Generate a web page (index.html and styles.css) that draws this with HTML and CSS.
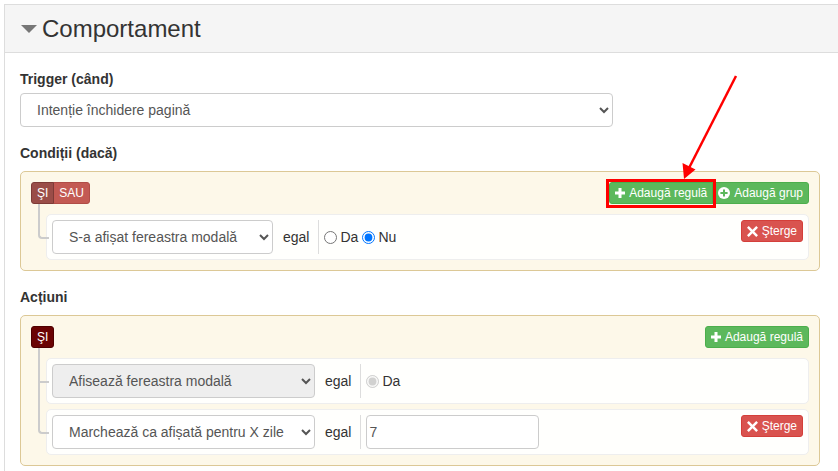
FILE: index.html
```html
<!DOCTYPE html>
<html lang="ro">
<head>
<meta charset="utf-8">
<title>Comportament</title>
<link rel="stylesheet" href="styles.css">
</head>
<body>
<div class="panel">
  <div class="panel-heading"><span class="caret"></span><span class="panel-title">Comportament</span></div>
  <div class="panel-body">
    <div class="form-group">
      <label class="lbl">Trigger (când)</label>
      <select class="form-control trigger-select"><option>Intenție închidere pagină</option></select>
    </div>

    <div class="form-group">
      <label class="lbl">Condiții (dacă)</label>
      <div class="qb-group">
        <div class="qb-header">
          <div class="btn-group">
            <span class="btn btn-xs btn-si">ŞI</span><span class="btn btn-xs btn-sau">SAU</span>
          </div>
          <div class="btn-group">
            <span class="btn btn-xs btn-success"><svg class="ico" width="10" height="10" viewBox="0 0 10 10"><path d="M3.5 0h3v3.5H10v3H6.5V10h-3V6.5H0v-3h3.5z" fill="#fff"/></svg>Adaugă regulă</span><span class="btn btn-xs btn-success"><svg class="ico" width="12" height="12" viewBox="0 0 12 12"><circle cx="6" cy="6" r="6" fill="#fff"/><path d="M5 2.4h2V5h2.6v2H7v2.6H5V7H2.4V5H5z" fill="#5cb85c"/></svg>Adaugă grup</span>
          </div>
        </div>
        <ul class="rules">
          <li class="rule">
            <select class="form-control sel-cond"><option>S-a afișat fereastra modală</option></select>
            <span class="op">egal</span>
            <span class="val">
              <label class="radio"><input type="radio" name="r1">Da</label>
              <label class="radio"><input type="radio" name="r1" checked>Nu</label>
            </span>
            <span class="btn btn-xs btn-danger del"><svg class="ico" width="11" height="11" viewBox="0 0 10 10"><path d="M1.6 0L5 3.4 8.4 0 10 1.6 6.6 5 10 8.4 8.4 10 5 6.6 1.6 10 0 8.4 3.4 5 0 1.6z" fill="#fff"/></svg>Şterge</span>
          </li>
        </ul>
      </div>
    </div>

    <div class="form-group">
      <label class="lbl">Acțiuni</label>
      <div class="qb-group">
        <div class="qb-header">
          <div class="btn-group">
            <span class="btn btn-xs btn-si-dark">ŞI</span>
          </div>
          <div class="btn-group">
            <span class="btn btn-xs btn-success"><svg class="ico" width="10" height="10" viewBox="0 0 10 10"><path d="M3.5 0h3v3.5H10v3H6.5V10h-3V6.5H0v-3h3.5z" fill="#fff"/></svg>Adaugă regulă</span>
          </div>
        </div>
        <ul class="rules">
          <li class="rule">
            <select class="form-control sel-act" disabled><option>Afisează fereastra modală</option></select>
            <span class="op">egal</span>
            <span class="val">
              <label class="radio"><input type="radio" name="r2" checked disabled>Da</label>
            </span>
          </li>
          <li class="rule">
            <select class="form-control sel-act"><option>Marchează ca afișată pentru X zile</option></select>
            <span class="op">egal</span>
            <span class="val">
              <input type="text" class="num-input" value="7">
            </span>
            <span class="btn btn-xs btn-danger del"><svg class="ico" width="11" height="11" viewBox="0 0 10 10"><path d="M1.6 0L5 3.4 8.4 0 10 1.6 6.6 5 10 8.4 8.4 10 5 6.6 1.6 10 0 8.4 3.4 5 0 1.6z" fill="#fff"/></svg>Şterge</span>
          </li>
        </ul>
      </div>
    </div>
  </div>
</div>

<svg class="annot" width="838" height="471" viewBox="0 0 838 471">
  <rect x="607.5" y="180.5" width="107" height="26" fill="none" stroke="#ff0000" stroke-width="3"/>
  <line x1="736" y1="76" x2="689" y2="168" stroke="#ff0000" stroke-width="2.5"/>
  <polygon points="684,179 682.5,163 695.5,169.5" fill="#ff0000"/>
</svg>
</body>
</html>
```
FILE: styles.css
```css
* { box-sizing: border-box; }

html, body {
  margin: 0;
  padding: 0;
  overflow: hidden;
  width: 838px;
  height: 471px;
  background: #fff;
}

body {
  font-family: "Liberation Sans", Arial, sans-serif;
  font-size: 14px;
  line-height: 20px;
  color: #333;
  padding: 4px 0 0 4px;
}

.panel {
  width: 860px;
  border: 1px solid #ddd;
  background: #fff;
}

.panel-heading {
  display: flex;
  align-items: center;
  height: 48px;
  padding: 0 0 0 16px;
  background: #f5f5f5;
  border-bottom: 1px solid #ddd;
}

.caret {
  width: 0;
  height: 0;
  border-left: 8.5px solid transparent;
  border-right: 8.5px solid transparent;
  border-top: 8px solid #777;
  margin-right: 5px;
  margin-top: 1px;
}

.panel-title {
  font-size: 24px;
  line-height: 26px;
  color: #333;
  margin-top: 1px;
}

.panel-body {
  padding: 16px 15px 0 15px;
}

.form-group {
  margin-bottom: 16px;
}

.lbl {
  display: block;
  font-weight: bold;
  margin-bottom: 4px;
}

.form-control {
  height: 34px;
  padding: 6px 12px;
  font-family: "Liberation Sans", Arial, sans-serif;
  font-size: 14px;
  color: #555;
  background-color: #fff;
  border: 1px solid #ccc;
  border-radius: 4px;
}

.form-control:disabled {
  background-color: #eee;
  opacity: 1;
  color: #555;
}

.trigger-select { width: 593px; display: block; }
.sel-cond { width: 221px; }
.sel-act { width: 263px; }

.qb-group {
  width: 800px;
  margin-top: 8px;
  padding: 10px;
  background: #fdf8e9;
  border: 1px solid #dcc896;
  border-radius: 5px;
}

.qb-header {
  display: flex;
  justify-content: space-between;
  margin-bottom: 10px;
}

.btn-group {
  display: flex;
}

.btn {
  display: inline-flex;
  align-items: center;
  color: #fff;
  border: 1px solid transparent;
  white-space: nowrap;
}

.btn-xs {
  height: 22px;
  padding: 1px 5px;
  font-size: 12px;
  line-height: 18px;
  border-radius: 3px;
}

.btn-group .btn + .btn {
  margin-left: -1px;
}
.btn-group .btn:not(:last-child) {
  border-top-right-radius: 0;
  border-bottom-right-radius: 0;
}
.btn-group .btn:not(:first-child) {
  border-top-left-radius: 0;
  border-bottom-left-radius: 0;
}

.ico {
  margin-right: 4px;
  flex: none;
}

.btn-si {
  background: #9a4d48;
  border-color: #7e3b37;
  position: relative;
  z-index: 1;
}
.btn-sau {
  background: #c35a53;
  border-color: #b04d47;
}
.btn-si-dark {
  background: #6a0303;
  border-color: #4e0000;
}
.btn-success {
  background: #5cb85c;
  border-color: #4cae4c;
}
.btn-danger {
  background: #d9534f;
  border-color: #d43f3a;
}

.rules {
  list-style: none;
  margin: 0;
  padding: 0 0 0 15px;
  display: flex;
  flex-direction: column;
  gap: 5px;
}

.rule {
  position: relative;
  display: flex;
  align-items: center;
  padding: 5px;
  background: rgba(255, 255, 255, 0.9);
  border: 1px solid #eee;
  border-radius: 5px;
}

.rule::before,
.rule::after {
  content: "";
  position: absolute;
  left: -9px;
  width: 9px;
  border-color: #ccc;
  border-style: solid;
}
.rule::before {
  top: -6px;
  height: calc(50% + 6px);
  border-width: 0 0 2px 2px;
}
.rule:first-child::before {
  top: -11px;
  height: calc(50% + 11px);
}
.rule::after {
  top: 50%;
  height: calc(50% + 6px);
  border-width: 0 0 0 2px;
}
.rule:last-child::before {
  border-radius: 0 0 0 4px;
}
.rule:last-child::after {
  display: none;
}

.op {
  margin-left: 10px;
  margin-right: 9px;
}

.val {
  display: flex;
  align-items: center;
  border-left: 1px solid #ddd;
  padding-left: 5px;
  min-height: 34px;
}

.radio {
  display: inline-flex;
  align-items: center;
  margin-right: 4px;
}
.radio input {
  margin: 0 3px 0 0;
}

.num-input {
  width: 173px;
  height: 34px;
  padding: 0 2px;
  font-family: "Liberation Sans", Arial, sans-serif;
  font-size: 14px;
  color: #555;
  border: 1px solid #ccc;
  border-radius: 4px;
}

.del {
  margin-left: auto;
  align-self: flex-start;
}

.annot {
  position: absolute;
  left: 0;
  top: 0;
  pointer-events: none;
}
```
